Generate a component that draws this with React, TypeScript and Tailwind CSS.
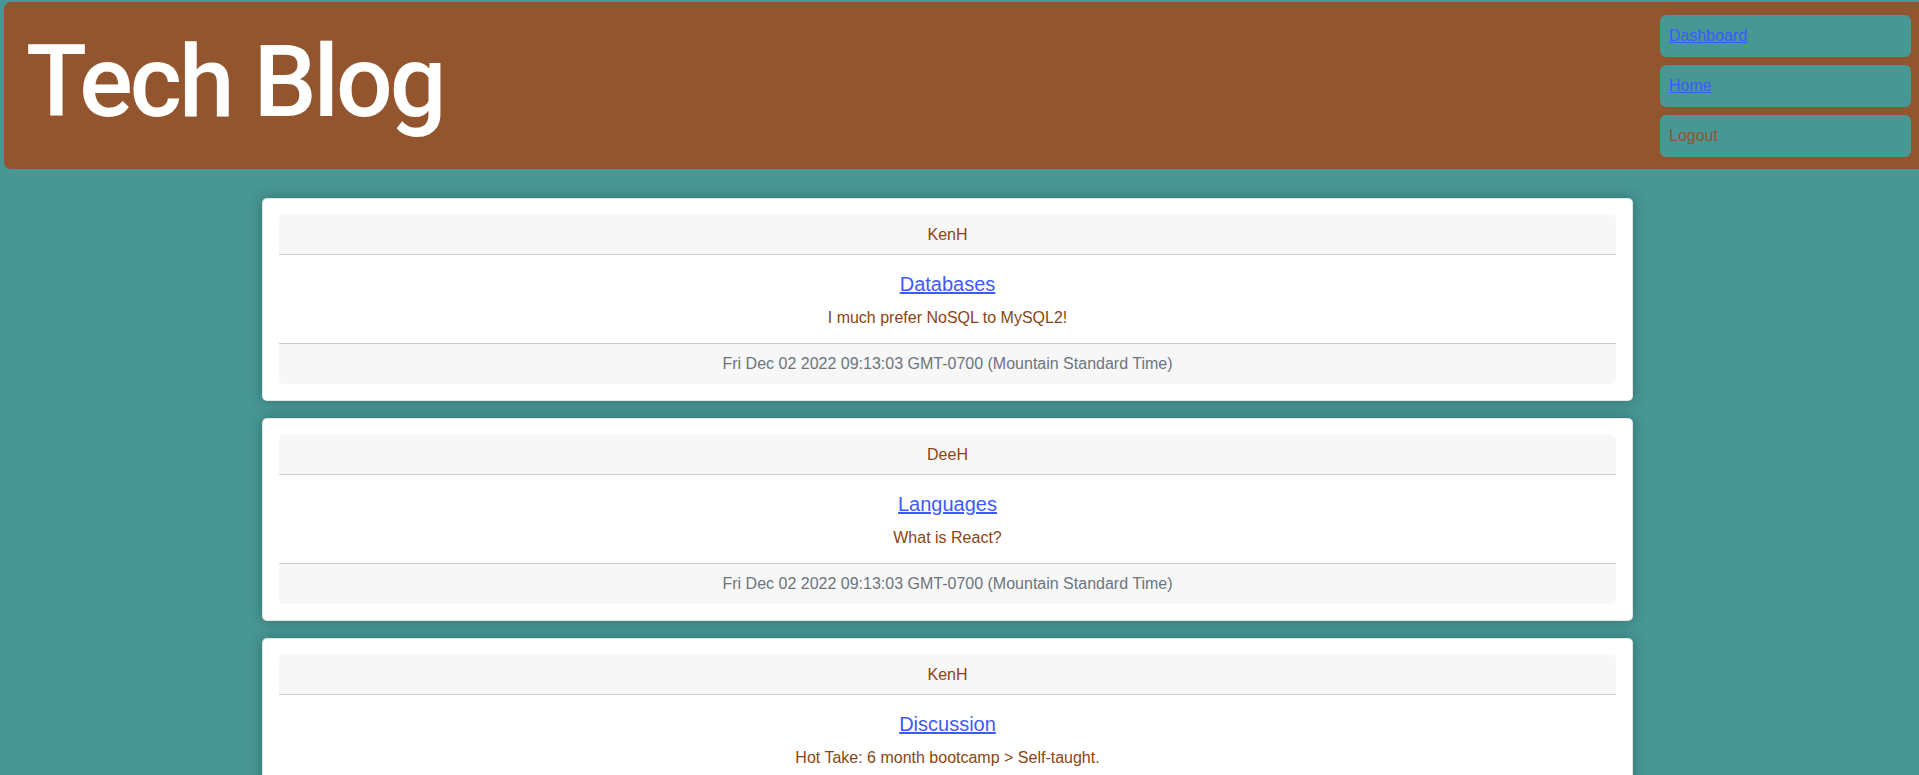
const posts = [
  {
    author: "KenH",
    title: "Databases",
    body: "I much prefer NoSQL to MySQL2!",
    date: "Fri Dec 02 2022 09:13:03 GMT-0700 (Mountain Standard Time)",
  },
  {
    author: "DeeH",
    title: "Languages",
    body: "What is React?",
    date: "Fri Dec 02 2022 09:13:03 GMT-0700 (Mountain Standard Time)",
  },
  {
    author: "KenH",
    title: "Discussion",
    body: "Hot Take: 6 month bootcamp > Self-taught.",
    date: "Fri Dec 02 2022 09:13:03 GMT-0700 (Mountain Standard Time)",
  },
];

const PostCard = ({ post }: { post: (typeof posts)[number] }) => {
  return (
    <div className="bg-white rounded-[5px] border border-black/10 p-[16px] shadow-[0_0_14px_rgba(0,0,0,0.28)]">
      <div className="h-[40px] flex items-center justify-center bg-[#f7f7f7] rounded-t-[5px] border-b border-[#cdcdcd] text-[16px] text-[#8b4513]">
        {post.author}
      </div>
      <div className="h-[88px] flex flex-col items-center pt-[17px]">
        <a href="#" className="text-[20px] leading-[24px] text-[#3d5afe] underline">
          {post.title}
        </a>
        <p className="mt-[10px] text-[16px] leading-[24px] text-[#8b4513]">{post.body}</p>
      </div>
      <div className="h-[41px] flex items-center justify-center bg-[#f7f7f7] rounded-b-[5px] border-t border-[#cdcdcd] text-[16px] text-[#6c757d]">
        {post.date}
      </div>
    </div>
  );
};

const App = () => {
  return (
    <div className="min-h-[775px] bg-[#479795] pt-[2px] font-['Liberation_Sans',Arial,sans-serif]">
      <header className="ml-[4px] h-[167px] flex justify-between bg-[#93552d] rounded-l-[7px]">
        <h1 className="pl-[22px] pt-[20px] text-[100px] leading-[120px] font-medium tracking-[-3px] text-white font-['Roboto',sans-serif]">
          Tech Blog
        </h1>
        <nav className="w-[251px] mr-[8px] mt-[13px] flex flex-col gap-[8px]">
          <div className="h-[42px] flex items-center px-[9px] bg-[#479795] rounded-[6px]">
            <a href="#" className="text-[16px] text-[#3d5afe] underline">
              Dashboard
            </a>
          </div>
          <div className="h-[42px] flex items-center px-[9px] bg-[#479795] rounded-[6px]">
            <a href="#" className="text-[16px] text-[#3d5afe] underline">
              Home
            </a>
          </div>
          <div className="h-[42px] flex items-center px-[9px] bg-[#479795] rounded-[6px]">
            <span className="text-[16px] text-[#93552d]">Logout</span>
          </div>
        </nav>
      </header>
      <main className="ml-[262px] w-[1371px] mt-[29px] flex flex-col gap-[17px] pb-[20px]">
        {posts.map((post, i) => (
          <PostCard key={i} post={post} />
        ))}
      </main>
    </div>
  );
};

export default App;
